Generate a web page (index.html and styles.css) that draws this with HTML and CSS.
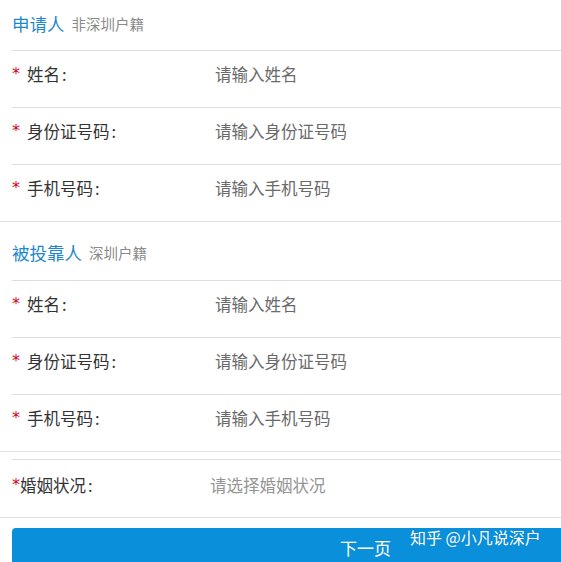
FILE: index.html
```html
<!DOCTYPE html>
<html lang="zh-CN">
<head>
<meta charset="utf-8">
<title>申请人信息</title>
<link rel="stylesheet" href="styles.css">
</head>
<body>
<div class="page">
  <section class="section">
    <div class="section-head">
      <span class="head-title">申请人</span>
      <span class="head-sub">非深圳户籍</span>
    </div>
    <div class="row"><span class="star">*</span><span class="label">姓名<span class="colon">:</span></span><span class="ph">请输入姓名</span></div>
    <div class="row"><span class="star">*</span><span class="label">身份证号码<span class="colon">:</span></span><span class="ph">请输入身份证号码</span></div>
    <div class="row"><span class="star">*</span><span class="label">手机号码<span class="colon">:</span></span><span class="ph">请输入手机号码</span></div>
  </section>
  <section class="section">
    <div class="section-head">
      <span class="head-title">被投靠人</span>
      <span class="head-sub">深圳户籍</span>
    </div>
    <div class="row"><span class="star">*</span><span class="label">姓名<span class="colon">:</span></span><span class="ph">请输入姓名</span></div>
    <div class="row"><span class="star">*</span><span class="label">身份证号码<span class="colon">:</span></span><span class="ph">请输入身份证号码</span></div>
    <div class="row"><span class="star">*</span><span class="label">手机号码<span class="colon">:</span></span><span class="ph">请输入手机号码</span></div>
  </section>
  <section class="section section-single">
    <div class="row"><span class="star star-tight">*</span><span class="label label-tight">婚姻状况<span class="colon">:</span></span><span class="ph ph-light">请选择婚姻状况</span></div>
  </section>
  <div class="btn-wrap">
    <div class="btn">下一页</div>
    <div class="watermark">知乎 @小凡说深户</div>
  </div>
</div>
</body>
</html>
```

FILE: styles.css
```css
html, body {
  margin: 0;
  padding: 0;
  background: #ffffff;
}
body {
  font-family: "Noto Sans CJK SC", "Noto Sans", "DejaVu Sans", sans-serif;
  overflow: hidden;
}
.page {
  width: 561px;
  height: 562px;
  overflow: hidden;
  position: relative;
}
.section {
  border-bottom: 1px solid #e3e3e3;
}
.section-head {
  margin-left: 12px;
  border-bottom: 1px solid #dedede;
  display: flex;
  align-items: center;
  gap: 7px;
  box-sizing: border-box;
  height: 51px;
  padding-bottom: 3px;
}
.section + .section .section-head {
  height: 59px;
  padding-top: 6px;
}
.head-title {
  font-size: 17.5px;
  color: #1f87cc;
  line-height: 1;
}
.head-sub {
  font-size: 14.5px;
  color: #8a8a8a;
  line-height: 1;
  padding-top: 2px;
}
.row {
  height: 57px;
  box-sizing: border-box;
  margin-left: 12px;
  border-bottom: 1px solid #dedede;
  display: flex;
  align-items: center;
  padding-bottom: 9px;
}
.section .row:last-child {
  border-bottom: none;
  height: 56px;
}
.star {
  width: 15px;
  color: #d0021b;
  font-size: 16px;
  line-height: 1;
  font-family: "DejaVu Sans", sans-serif;
  padding-bottom: 1px;
}
.label {
  width: 188px;
  font-size: 16.5px;
  color: #333333;
  line-height: 1;
}
.colon {
  margin-left: 2px;
}
.ph {
  font-size: 16.5px;
  color: #6a6a6a;
  line-height: 1;
}
.section-single {
  margin-top: 7px;
}
.section-single .row {
  border-top: 1px solid #dedede;
}
.section-single .row:last-child {
  height: 58px;
  padding-bottom: 7px;
}
.star-tight {
  width: 8px;
}
.label-tight {
  width: 190px;
}
.ph-light {
  color: #959595;
}
.btn-wrap {
  margin-top: 10px;
  margin-left: 12px;
  position: relative;
}
.btn {
  height: 48px;
  background: #0a8fda;
  border-top-left-radius: 4px;
  color: #ffffff;
  font-size: 17px;
  line-height: 1;
  box-sizing: border-box;
  padding-top: 11px;
  padding-left: 328px;
}
.watermark {
  position: absolute;
  top: 1px;
  left: 398px;
  color: #ffffff;
  font-size: 16px;
  line-height: 1;
  white-space: nowrap;
  text-shadow: 0 0 1px rgba(0,0,0,0.15);
}
```
